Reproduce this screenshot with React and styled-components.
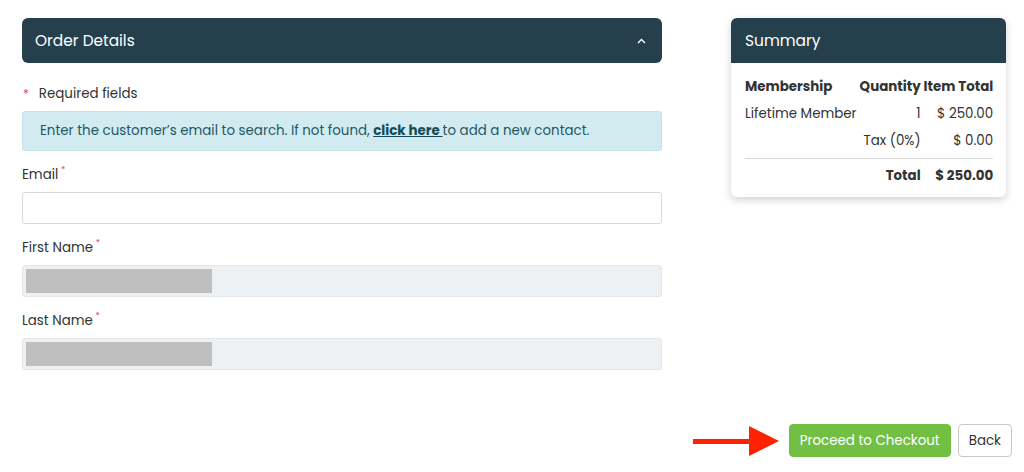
import { styled, createGlobalStyle } from 'styled-components';

const GlobalStyle = createGlobalStyle`
  body {
    margin: 0;
    background: #ffffff;
    font-family: "Poppins", Inter, "Noto Sans", sans-serif;
    color: #333;
  }
`;

export default function App() {
    return (
        <Page>
            <GlobalStyle />
            <Main>
                <Left>
                    <PanelHeader>
                        <span>Order Details</span>
                        <svg width="9" height="6" viewBox="0 0 9 6">
                            <path d="M1 5 L4.5 1.5 L8 5" fill="none" stroke="#fff" strokeWidth="1.4" />
                        </svg>
                    </PanelHeader>
                    <Required><Star>*</Star> Required fields</Required>
                    <Info>
                        Enter the customer’s email to search. If not found, <a href="#">click here </a>to add a new contact.
                    </Info>
                    <Field>
                        <Label>Email <Mark>*</Mark></Label>
                        <Input />
                    </Field>
                    <Field>
                        <Label>First Name <Mark>*</Mark></Label>
                        <Input disabled><Redact /></Input>
                    </Field>
                    <Field>
                        <Label>Last Name <Mark>*</Mark></Label>
                        <Input disabled><Redact /></Input>
                    </Field>
                </Left>
                <Summary>
                    <PanelHeader>
                        <span>Summary</span>
                    </PanelHeader>
                    <Table>
                        <Cell bold>Membership</Cell>
                        <Cell bold right>Quantity</Cell>
                        <Cell bold right>Item Total</Cell>

                        <Cell>Lifetime Member</Cell>
                        <Cell right>1</Cell>
                        <Cell right>$ 250.00</Cell>

                        <Cell />
                        <Cell right>Tax (0%)</Cell>
                        <Cell right>$ 0.00</Cell>

                        <Divider />

                        <Cell />
                        <Cell bold right>Total</Cell>
                        <Cell bold right>$ 250.00</Cell>
                    </Table>
                </Summary>
            </Main>
            <Footer>
                <svg width="86" height="30" viewBox="0 0 86 30">
                    <rect x="0" y="13" width="58" height="5" fill="#ff2200" />
                    <polygon points="56,0 86,15 56,30" fill="#ff2200" />
                </svg>
                <Button primary>Proceed to Checkout</Button>
                <Button>Back</Button>
            </Footer>
        </Page>
    );
}

const Page = styled.div`
    width: 1024px;
    height: 472px;
    display: flex;
    flex-direction: column;
    justify-content: space-between;
    padding: 18px 12px 15px 22px;
    box-sizing: border-box;
`;

const Main = styled.div`
    display: flex;
    align-items: flex-start;
    gap: 69px;
`;

const Left = styled.div`
    width: 640px;
`;

const PanelHeader = styled.div`
    height: 45px;
    background: #263f4c;
    color: #fff;
    border-radius: 6px;
    display: flex;
    align-items: center;
    justify-content: space-between;
    padding: 0 14px 0 13px;
    font-size: 15.4px;
    svg { margin-right: 2px; }
`;

const Required = styled.div`
    margin: 21px 0 0 0;
    font-size: 13.4px;
    color: #333;
    display: flex;
    align-items: center;
    gap: 10px;
`;

const Star = styled.span`
    color: #e64848;
    font-size: 12px;
    padding-left: 1px;
`;

const Info = styled.div`
    margin-top: 7px;
    height: 40px;
    box-sizing: border-box;
    background: #d1ebf0;
    border: 1px solid #c2e3ea;
    border-radius: 3px;
    color: #1f5866;
    font-size: 13.4px;
    display: flex;
    align-items: center;
    padding: 0 17px;
    white-space: pre;
    a {
        color: #144b59;
        font-weight: 700;
        text-decoration: underline;
    }
`;

const Field = styled.div`
    margin-top: 15px;
`;

const Label = styled.div`
    font-size: 13.4px;
    height: 18px;
    line-height: 18px;
    color: #333;
    margin-bottom: 8px;
`;

const Mark = styled.span`
    color: #e64848;
    font-size: 9px;
    line-height: 0;
    position: relative;
    top: -6px;
    margin-left: -1px;
`;

const Input = styled.div`
    height: 32px;
    box-sizing: border-box;
    border: 1px solid ${p => (p.disabled ? '#e3e7ea' : '#d4d9dd')};
    background: ${p => (p.disabled ? '#edf1f4' : '#fff')};
    border-radius: 3px;
    padding: 3px;
`;

const Redact = styled.div`
    width: 186px;
    height: 24px;
    background: #bfbfbf;
`;

const Summary = styled.div`
    width: 275px;
    border-radius: 6px;
    background: #fff;
    box-shadow: 0 3px 8px rgba(0, 0, 0, 0.18);
    ${PanelHeader} {
        border-radius: 6px 6px 0 0;
        padding-left: 14px;
    }
`;

const Table = styled.div`
    display: grid;
    grid-template-columns: 1fr auto auto;
    column-gap: 3px;
    padding: 10px 13px 8px 14px;
    font-size: 13.4px;
    color: #333;
`;

const Cell = styled.div`
    height: 27px;
    line-height: 27px;
    text-align: ${p => (p.right ? 'right' : 'left')};
    font-weight: ${p => (p.bold ? 700 : 400)};
    white-space: nowrap;
`;

const Divider = styled.div`
    grid-column: 1 / -1;
    height: 1px;
    background: #d7d7d7;
    margin: 4px 0 3px;
`;

const Footer = styled.div`
    display: flex;
    justify-content: flex-end;
    align-items: center;
    gap: 7px;
    svg { margin-right: 3px; }
`;

const Button = styled.button`
    height: 33px;
    box-sizing: border-box;
    border-radius: 4px;
    font-family: inherit;
    font-size: 13.4px;
    padding: 0 10px;
    border: 1px solid ${p => (p.primary ? '#72bf44' : '#c8c8c8')};
    background: ${p => (p.primary ? '#72bf44' : '#fff')};
    color: ${p => (p.primary ? '#fff' : '#333')};
`;
